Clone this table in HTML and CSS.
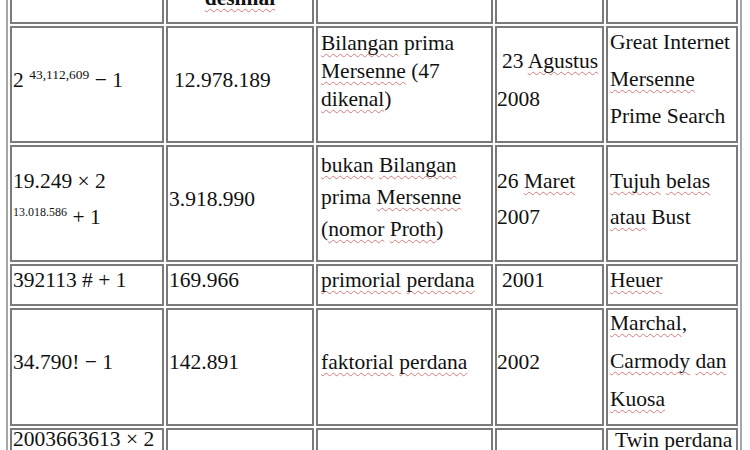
FILE: index.html
```html
<!DOCTYPE html>
<html lang="id">
<head>
<meta charset="utf-8">
<title>Bilangan prima terbesar yang diketahui</title>
<link rel="stylesheet" href="styles.css">
</head>
<body>
<table class="primes">
  <thead>
    <tr class="r-head">
      <th class="c1"><span class="sp">Bilangan</span></th>
      <th class="c2"><span class="sp">Jumlah</span> digit<br><span class="sp">desimal</span></th>
      <th class="c3"><span class="sp">Bentuk</span></th>
      <th class="c4"><span class="sp">Tanggal</span></th>
      <th class="c5"><span class="sp">Penemu</span></th>
    </tr>
  </thead>
  <tbody>
    <tr class="r1">
      <td>2 <sup class="sup">43,112,609</sup> − 1</td>
      <td class="ind">12.978.189</td>
      <td class="top pt-1"><span class="sp">Bilangan</span> prima<br><span class="sp">Mersenne</span> (47<br><span class="sp">dikenal</span>)</td>
      <td class="lh-38 ind">23 <span class="sp">Agustus</span><br>2008</td>
      <td class="pb-2"><div class="lines lh-37 lift-4">Great Internet<br><span class="sp">Mersenne</span><br>Prime Search</div></td>
    </tr>
    <tr class="r2">
      <td class="lh-36">19.249 × 2<br><sup class="sup sup-s">13.018.586</sup> + 1</td>
      <td>3.918.990</td>
      <td class="lh-32 pb-13"><span class="sp">bukan</span> <span class="sp">Bilangan</span><br>prima <span class="sp">Mersenne</span><br>(<span class="sp">nomor</span> <span class="sp">Proth</span>)</td>
      <td class="lh-36">26 <span class="sp">Maret</span><br>2007</td>
      <td class="lh-36"><span class="sp">Tujuh</span> <span class="sp">belas</span><br><span class="sp">atau</span> Bust</td>
    </tr>
    <tr class="r3">
      <td>392113 # + 1</td>
      <td>169.966</td>
      <td><span class="sp">primorial</span> <span class="sp">perdana</span></td>
      <td class="ind">2001</td>
      <td><span class="sp">Heuer</span></td>
    </tr>
    <tr class="r4">
      <td>34.790! − 1</td>
      <td>142.891</td>
      <td><span class="sp">faktorial</span> <span class="sp">perdana</span></td>
      <td>2002</td>
      <td class="pb-0"><div class="lines lh-38 lift-6"><span class="sp">Marchal</span>,<br><span class="sp">Carmody</span> <span class="sp">dan</span><br><span class="sp">Kuosa</span></div></td>
    </tr>
    <tr class="r5">
      <td class="top"><div class="lines lift-5">2003663613 × 2<br><sup class="sup sup-s">195.000</sup> ± 1</div></td>
      <td>58.711</td>
      <td>Twin <span class="sp">perdana</span></td>
      <td>2007</td>
      <td class="top ind"><div class="lines lh-37 lift-8">Twin <span class="sp">perdana</span><br><span class="sp">Cari</span> <span class="sp">dan</span><br>PrimeGrid</div></td>
    </tr>
  </tbody>
</table>
</body>
</html>
```

FILE: styles.css
```css
* {
  box-sizing: border-box;
}

html,
body {
  margin: 0;
  padding: 0;
  background: #ffffff;
}

body {
  font-family: "Liberation Serif", "Times New Roman", serif;
  font-size: 21.5px;
  color: #111111;
}

.primes {
  width: 736px;
  margin: -50px 0 0 6px;
  border: 2px solid #a6a6a6;
  border-spacing: 2px;
  table-layout: fixed;
  background: #ffffff;
}

.primes th,
.primes td {
  border: 2px solid #7a7a7a;
  padding: 0 1px 10px 1px;
  line-height: 28px;
  vertical-align: middle;
  text-align: left;
  white-space: nowrap;
  overflow: visible;
}

.primes th {
  font-weight: bold;
  text-align: center;
}

.c1 { width: 154px; }
.c2 { width: 148px; }
.c3 { width: 177px; }
.c4 { width: 109px; }
.c5 { width: 132px; }

.primes td:nth-child(3) {
  padding-left: 3px;
}

.primes td:nth-child(4) {
  padding-left: 0;
}

.primes td:nth-child(5) {
  padding-left: 2px;
  padding-right: 0;
}

.r1 { height: 117px; }
.r2 { height: 117px; }
.r3 { height: 42px; }
.r4 { height: 118px; }

.ind {
  text-indent: 5px;
}

.primes .lh-32 { line-height: 32px; }
.primes .lh-36 { line-height: 36px; }
.primes .lh-37 { line-height: 37px; }
.primes .lh-38 { line-height: 38px; }

.primes .pb-0 { padding-bottom: 0; }
.primes .pb-2 { padding-bottom: 2px; }
.primes .pb-13 { padding-bottom: 13px; }
.primes .pt-1 { padding-top: 1px; }

.primes td.top {
  vertical-align: top;
}

.lines {
  white-space: nowrap;
}

.lift-4 { margin: -4px 0 4px; }
.lift-5 { margin: -5px 0 5px; }
.lift-6 { margin: -6px 0 6px; }
.lift-8 { margin: -8px 0 8px; }

.sup {
  font-size: 13.5px;
  line-height: 0;
  vertical-align: 8px;
}

.sup-s {
  font-size: 12px;
}

.sp {
  text-decoration-line: underline;
  text-decoration-style: wavy;
  text-decoration-color: #d77a7a;
  text-decoration-thickness: 1px;
  text-underline-offset: 3px;
  text-decoration-skip-ink: none;
}
```
